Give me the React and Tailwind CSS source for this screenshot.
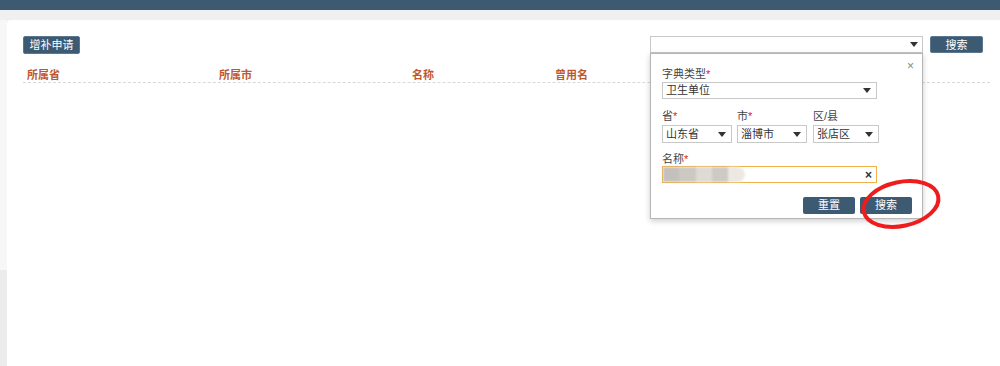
import React from "react";

const font = { fontFamily: '"Liberation Sans", "Noto Sans CJK SC", sans-serif' };

const Caret = () => (
  <span className="ml-auto w-0 h-0 border-l-[4px] border-r-[4px] border-t-[5px] border-l-transparent border-r-transparent border-t-[#333]" />
);

const Star = () => <span className="text-[#e02020]">*</span>;

const Select = ({ value, className }) => (
  <div className={"flex items-center border border-[#c8c8c8] bg-white pl-[3px] pr-[5px] text-[11px] text-[#333] " + className}>
    <span>{value}</span>
    <Caret />
  </div>
);

const SearchPanel = () => (
  <div className="absolute left-0 top-[17px] w-[273px] h-[166px] bg-white border border-[#b5b5b5] shadow-[0_2px_6px_rgba(0,0,0,0.2)] px-[11px] pt-[14px]">
    <span className="absolute right-[8px] top-[3px] text-[12px] text-[#888]">×</span>
    <div className="text-[11px] text-[#444] leading-[13px]">
      字典类型<Star />
    </div>
    <Select value="卫生单位" className="w-[215px] h-[17px] mt-[1px]" />
    <div className="flex gap-[5px] mt-[11px]">
      <div className="w-[70px]">
        <div className="text-[11px] text-[#444] leading-[13px]">
          省<Star />
        </div>
        <Select value="山东省" className="w-[70px] h-[18px] mt-[2px]" />
      </div>
      <div className="w-[70px]">
        <div className="text-[11px] text-[#444] leading-[13px]">
          市<Star />
        </div>
        <Select value="淄博市" className="w-[70px] h-[18px] mt-[2px]" />
      </div>
      <div className="w-[66px] ml-[1px]">
        <div className="text-[11px] text-[#444] leading-[13px]">区/县</div>
        <Select value="张店区" className="w-[66px] h-[18px] mt-[2px]" />
      </div>
    </div>
    <div className="text-[11px] text-[#444] leading-[13px] mt-[10px]">
      名称<Star />
    </div>
    <div className="relative flex items-center w-[215px] h-[17px] border border-[#f0b04a] bg-white">
      <div className="flex h-[15px] blur-[1px]">
        <div className="w-[16px] bg-[#c4c0bb]" />
        <div className="w-[17px] bg-[#ccc8c2]" />
        <div className="w-[16px] bg-[#dedad4]" />
        <div className="w-[16px] bg-[#cdc9c3]" />
        <div className="w-[17px] bg-[#ece8e2] rounded-r-full" />
      </div>
      <span className="ml-auto mr-[4px] text-[12px] font-bold text-[#333] leading-none">×</span>
    </div>
    <div className="flex justify-end gap-[5px] mt-[14px] mr-[-1px]">
      <button className="w-[52px] h-[17px] bg-[#3d5a73] text-white text-[11px] rounded-[2px]">重置</button>
      <button className="w-[52px] h-[17px] bg-[#3d5a73] text-white text-[11px] rounded-[2px]">搜索</button>
    </div>
    {/* red annotation ellipse */}
    <svg className="absolute left-[205px] top-[124px] overflow-visible" width="90" height="56">
      <ellipse cx="45" cy="26" rx="38" ry="22" fill="none" stroke="#ee1c1c" strokeWidth="4" transform="rotate(-12 45 26)" />
    </svg>
  </div>
);

export default function App() {
  return (
    <div className="w-[1000px] h-[366px] bg-[#f0f0f0] flex flex-col overflow-hidden" style={font}>
      <div className="h-[10px] bg-[#3d5a73] shrink-0" />
      <div className="flex flex-1 mt-[10px]">
        <div className="w-[7px] shrink-0 flex flex-col">
          <div className="h-[250px] bg-[#f7f7f7]" />
          <div className="flex-1 bg-[#ececec]" />
        </div>
        <div className="flex-1 min-w-0 bg-white rounded-tl-[4px] pl-[16px] pr-[17px] pt-[16px]">
          <div className="flex items-start">
            <button className="w-[57px] h-[18px] bg-[#3d5a73] border border-[#5a7690] text-white text-[11px] rounded-[2px]">增补申请</button>
            <div className="ml-auto relative">
              <div className="flex items-center gap-[7px]">
                <div className="flex items-center w-[273px] h-[17px] border border-[#c8c8c8] bg-white pr-[4px]">
                  <Caret />
                </div>
                <button className="w-[53px] h-[17px] bg-[#3d5a73] border border-[#5a7690] text-white text-[11px] rounded-[2px]">搜索</button>
              </div>
              <SearchPanel />
            </div>
          </div>
          <div className="flex mt-[15px] mr-[-7px] pb-[1px] leading-[12px] border-b border-dashed border-[#d8d8d8] text-[11px] font-bold text-[#c0582e]">
            <div className="w-[196px] pl-[4px]">所属省</div>
            <div className="w-[193px]">所属市</div>
            <div className="w-[143px]">名称</div>
            <div>曾用名</div>
          </div>
        </div>
      </div>
    </div>
  );
}
